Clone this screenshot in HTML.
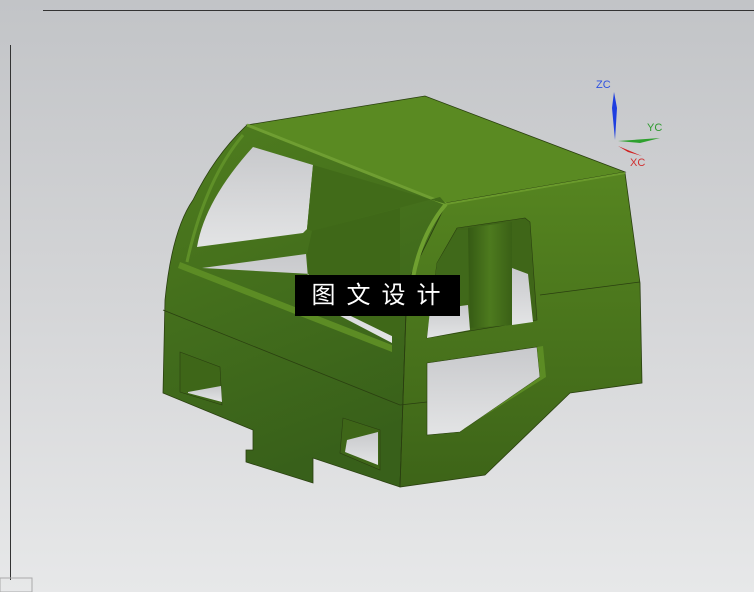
<!DOCTYPE html>
<html><head><meta charset="utf-8"><style>
html,body{margin:0;padding:0;}
body{width:754px;height:592px;overflow:hidden;position:relative;background:linear-gradient(#c2c4c7 0%,#d4d5d7 50%,#e7e8e9 100%);font-family:"Liberation Sans",sans-serif;}
.lab{position:absolute;font-size:11px;}
</style></head><body>
<svg width="754" height="592" style="position:absolute;left:0;top:0">
<defs>
<linearGradient id="lf" x1="0" y1="0" x2="0.3" y2="1"><stop offset="0" stop-color="#4f7d1e"/><stop offset="1" stop-color="#38601a"/></linearGradient>
<linearGradient id="rf" x1="0" y1="0" x2="0" y2="1"><stop offset="0" stop-color="#568520"/><stop offset="1" stop-color="#3d6418"/></linearGradient>
<linearGradient id="bg" x1="0" y1="0" x2="0" y2="1"><stop offset="0" stop-color="#c8c9cc"/><stop offset="1" stop-color="#e3e4e5"/></linearGradient>
<linearGradient id="pil" x1="0" y1="0" x2="1" y2="0"><stop offset="0" stop-color="#355a14"/><stop offset="0.5" stop-color="#4d7a1e"/><stop offset="1" stop-color="#3a6016"/></linearGradient>
</defs>
<line x1="43" y1="10.5" x2="754" y2="10.5" stroke="#333" stroke-width="1"/>
<line x1="10.5" y1="45" x2="10.5" y2="580" stroke="#333" stroke-width="1"/>
<rect x="0" y="578" width="32" height="14" fill="none" stroke="#aaa"/>
<path d="M247,125 L446,204 L407,283 L400,487 L313,458 L313,483 L246,462 L246,450 L253,450 L253,430 L163,393 L165,300 Q172,230 193,200 Q215,155 247,125 Z" fill="url(#lf)" stroke="#2a3f10" stroke-width="0.8"/>
<path d="M446,204 L625,173 L640,283 L642,383 L570,393 L485,475 L400,487 L407,283 Z" fill="url(#rf)" stroke="#2a3f10" stroke-width="0.8"/>
<path d="M247,125 L425,96 L625,172 L446,203 Z" fill="#5a8a22" stroke="#2a3f10" stroke-width="0.8"/>
<path d="M247,125 L446,204" stroke="#6f9e32" stroke-width="3"/>
<path d="M446,204 L625,173" stroke="#6a9a2c" stroke-width="2"/>
<path d="M446,204 Q420,235 412,283" stroke="#6fa030" stroke-width="4" fill="none"/>
<path d="M243,135 Q205,180 187,262" stroke="#5f9028" stroke-width="3" fill="none"/>
<!-- left upper window -->
<path d="M253,147 L313,165 L307,229 L303,233 L197,247 Q205,200 253,147 Z" fill="url(#bg)"/>
<path d="M313,165 L307,229 L312,231 L440,197 L446,204 Z" fill="#416b19"/>
<path d="M202,268 L306,254 L309,290 L300,295 L392,343 L392,310 L312,274 Z" fill="url(#bg)"/>
<path d="M312,231 L400,208 L400,340 L310,296 L307,254 Z" fill="#3f6818"/>
<path d="M180,262 L392,345 L392,352 L178,268 Z" fill="#5c8c24"/>
<path d="M163,310 L400,405 L427,402" stroke="#2a3f10" stroke-width="0.8" fill="none"/>
<path d="M540,295 L640,282" stroke="#2a3f10" stroke-width="0.8"/>
<path d="M407,283 L400,487" stroke="#2a3f10" stroke-width="0.8"/>
<!-- right upper window -->
<path d="M457,228 L525,218 L530,222 L537,320 L427,338 L437,263 Z" fill="#3f6618" stroke="#2a3f10" stroke-width="0.6"/>
<path d="M512,268 L528,274 L533,322 L512,325 Z" fill="url(#bg)"/>
<path d="M427,338 L437,263 L457,230 L468,230 L468,300 Z" fill="#40691a"/>
<path d="M427,338 L430,310 L468,305 L470,330 Z" fill="url(#bg)"/>
<path d="M468,228 L512,222 L512,325 L470,328 Z" fill="url(#pil)"/>
<!-- right lower window -->
<path d="M427,363 L537,347 L540,377 L460,432 L427,435 Z" fill="url(#bg)" stroke="#2a3f10" stroke-width="0.6"/>
<path d="M537,347 L540,377 L460,432 L465,428 L546,377 L543,346 Z" fill="#5c8c24"/>
<path d="M180,352 L220,367 L222,405 L180,392 Z" fill="#3e6618" stroke="#2a3f10" stroke-width="0.6"/>
<path d="M188,392 L221,386 L222,402 L188,393 Z" fill="url(#bg)"/>
<path d="M343,418 L380,430 L380,470 L340,453 Z" fill="#3e6618" stroke="#2a3f10" stroke-width="0.6"/>
<path d="M347,440 L378,432 L378,465 L345,452 Z" fill="url(#bg)"/>
<path d="M614,92 L617,108 L615,140 L612,108 Z" fill="#1e3ee0"/>
<path d="M618,141 L660,138 L640,143 Z" fill="#2ea02e"/>
<path d="M618,146 L642,156 L628,152 Z" fill="#d02020"/>
<rect x="295" y="275" width="165" height="41" fill="#000"/>
</svg>
<div class="lab" style="left:596px;top:79px;color:#2e52e0">ZC</div>
<div class="lab" style="left:647px;top:122px;color:#2e9a2e">YC</div>
<div class="lab" style="left:630px;top:157px;color:#d03030">XC</div>
<div style="position:absolute;left:295px;top:275px;width:165px;height:41px;color:#fff;font-family:'Liberation Sans','Noto Sans CJK SC',sans-serif;font-size:24px;line-height:41px;text-align:center;letter-spacing:11px;padding-left:8px;box-sizing:border-box">图文设计</div>
</body></html>
